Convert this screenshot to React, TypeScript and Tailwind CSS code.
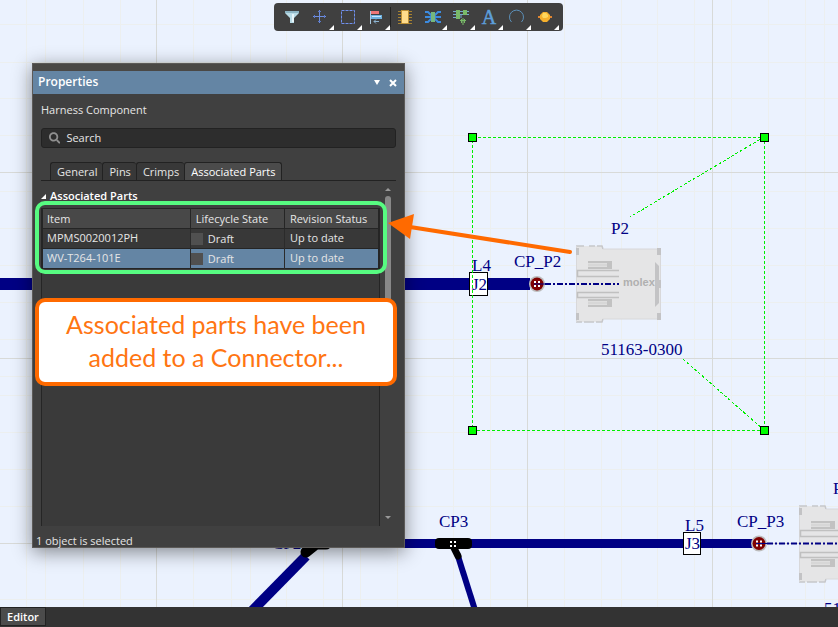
import { Fragment, useState } from 'react';
import type { ReactNode } from 'react';
import { FaSearch } from 'react-icons/fa';

const minorX = [26, 45, 83, 120, 193, 231, 250, 286, 323, 360, 397, 453, 490, 564, 601, 621, 657, 694, 731, 768, 805, 824];
const majorX = [156, 342, 527, 712];
const minorY = [24, 62, 98, 135, 191, 228, 265, 302, 339, 376, 395, 432, 469, 506, 599];
const majorY = [172, 358, 543];

const parts = [
  { item: 'MPMS0020012PH', state: 'Draft', revision: 'Up to date' },
  { item: 'WV-T264-101E', state: 'Draft', revision: 'Up to date' },
];

const tabs = ['General', 'Pins', 'Crimps', 'Associated Parts'];

const tools: { label: string; menu: boolean; icon: ReactNode }[] = [
  {
    label: 'Filter',
    menu: false,
    icon: (
      <>
        <path d="M3 4h14v2l-5 5v5H8v-5L3 6z" fill="#b9dbe6" />
        <path d="M3 4h14v2H3z" fill="#8db4c4" />
        <path d="M10 7h2v8h-2z" fill="#e6f5fa" />
      </>
    ),
  },
  {
    label: 'Move',
    menu: true,
    icon: (
      <>
        <path d="M9.5 3v13M3 9.5h13" stroke="#6f8fe0" fill="none" />
        <path d="M8 4.5h3M8 14.5h3M4.5 8v3M14.5 8v3" stroke="#5a78c8" fill="none" />
      </>
    ),
  },
  {
    label: 'Select area',
    menu: true,
    icon: <rect x="3.5" y="3.5" width="13" height="13" fill="none" stroke="#7090ee" strokeDasharray="3 1" />,
  },
  {
    label: 'Align',
    menu: true,
    icon: (
      <>
        <path d="M4.5 4v13" stroke="#a9c8e0" />
        <rect x="5" y="4" width="8" height="3" fill="#ee7777" />
        <rect x="5" y="8" width="11" height="4" fill="#6db1df" />
        <path d="M6 9.5h9" stroke="#c6e8ff" />
        <path d="M13 14.5H8M10 12.5l-2 2 2 2" stroke="#8db5d3" fill="none" />
      </>
    ),
  },
  {
    label: 'Component',
    menu: false,
    icon: (
      <>
        <path d="M3 4.5h14M3 7.5h14M3 10.5h14M3 13.5h14M3 16.5h14" stroke="#a78230" />
        <rect x="6.5" y="3.5" width="7" height="13" fill="#ffdc8c" stroke="#be9136" />
      </>
    ),
  },
  {
    label: 'Splice',
    menu: true,
    icon: (
      <>
        <path d="M2 5h3l4 4h2l4-4h3M2 10h16M2 15h3l4-4h2l4 4h3" stroke="#3c8be0" strokeWidth="2" fill="none" />
        <rect x="8" y="5" width="4" height="10" fill="#76b77d" />
      </>
    ),
  },
  {
    label: 'Harness connector',
    menu: true,
    icon: (
      <>
        <path d="M2 4.5h16M2 7.5h16M2 10.5h7M10 7v4" stroke="#76a9cf" />
        <rect x="5" y="3" width="4" height="9" fill="#79ba68" />
        <rect x="12" y="3" width="4" height="5" fill="#79ba68" />
        <path d="M9 13.5h6M12 11v7M10.5 12v4M13.5 12v4" stroke="#79ba68" />
      </>
    ),
  },
  {
    label: 'Text',
    menu: true,
    icon: (
      <text x="10" y="17" textAnchor="middle" fill="#5d9fdb" stroke="#5d9fdb" strokeWidth="0.5" className="font-['Liberation_Serif',serif] text-[20px]">
        A
      </text>
    ),
  },
  {
    label: 'Arc',
    menu: true,
    icon: <path d="M4.5 15a7 7 0 1 1 10 0" stroke="#5b8fb8" fill="none" />,
  },
  {
    label: 'No connect',
    menu: true,
    icon: (
      <>
        <path d="M3 10h14" stroke="#e08530" strokeWidth="2" />
        <path d="M8 5h4l3 3v4l-3 3H8l-3-3V8z" fill="#f6b02c" />
        <path d="M8 6h3l2 2v2l-2 1H8L7 9z" fill="#ffd75c" />
      </>
    ),
  },
];

function Toolbar() {
  return (
    <div className="absolute left-[274px] top-[3px] flex h-7 items-center rounded bg-[#404040] px-1">
      {tools.map((tool, i) => (
        <Fragment key={tool.label}>
          {i === 4 && <span className="h-5 w-px bg-[#222]" />}
          <button type="button" aria-label={tool.label} className="relative flex h-7 w-7 items-center justify-center">
            <svg viewBox="0 0 20 20" className="h-5 w-5">{tool.icon}</svg>
            {tool.menu && (
              <svg viewBox="0 0 5 5" className="absolute bottom-px right-0 h-[5px] w-[5px]">
                <path d="M5 0v5H0z" fill="#fff" />
              </svg>
            )}
          </button>
        </Fragment>
      ))}
    </div>
  );
}

function Connector({ x, y }: { x: number; y: number }) {
  return (
    <g transform={`translate(${x} ${y})`}>
      <path d="M0 1h27v3h58v70H27v3H0z" fill="#e5e5e6" />
      <path d="M0 1h8M13 1h6M21 1h5l1 3M0 77h6M8 77h10M20 77h6l1-3" stroke="#c6c7ca" strokeWidth="1.5" fill="none" />
      <path d="M27 4h58M27 74h58M.5 1v76M84.5 4v70" stroke="#d8d8da" fill="none" />
      <path d="M0 3h3v7H0zM0 68h3v7H0zM81 3h4v7h-4zM81 35h4v8h-4zM81 68h4v7h-4z" fill="#c3c3c5" />
      <path d="M79 17l4 4v37l-4 4z" fill="#c3c3c5" />
      <path d="M12 16h24v8H12zM12 54h24v8H12z" fill="#c2c2c2" />
      <path d="M12 18h19v4H12zM12 56h19v4H12z" fill="#dedede" />
      <path d="M12 20h19M12 58h19" stroke="#d0d0d0" />
      <path d="M43 25.5H1.5v6H43M43 47.5H1.5v5H43" fill="none" stroke="#c0c0c0" strokeWidth="1.5" />
      <text x="47" y="41" fill="#b0b0b0" className="font-['Liberation_Sans',sans-serif] text-[11px] font-bold">
        molex
      </text>
    </g>
  );
}

function Junction({ x, y }: { x: number; y: number }) {
  return (
    <g transform={`translate(${x} ${y})`}>
      <circle r="8" fill="#bcbcbc" />
      <circle r="6.5" fill="#800000" />
      <path d="M-3-3h2v2h-2zM1-3h2v2H1zM-3 1h2v2h-2zM1 1h2v2H1z" fill="#fff" />
      <path d="M-3 0H8" stroke="#000084" />
    </g>
  );
}

function Schematic() {
  return (
    <svg className="absolute inset-0 h-full w-full font-['Liberation_Serif',serif] text-[17px]">
      <g shapeRendering="crispEdges">
        {minorX.map((x) => <path key={x} d={`M${x}.5 0V2000`} stroke="#ecefef" />)}
        {minorY.map((y) => <path key={y} d={`M0 ${y}.5H3000`} stroke="#ecefef" />)}
        {majorX.map((x) => <path key={x} d={`M${x}.5 0V2000`} stroke="#d8dad8" />)}
        {majorY.map((y) => <path key={y} d={`M0 ${y}.5H3000`} stroke="#d8dad8" />)}
      </g>

      <Connector x={576} y={245} />
      <Connector x={799} y={505} />

      <g stroke="#000084" fill="none">
        <path d="M0 284H530" strokeWidth="12" />
        <path d="M380 543.5H753" strokeWidth="9" />
        <path d="M306 556L252 611" strokeWidth="10" />
        <path d="M457 553L475 610" strokeWidth="6" />
        <path d="M545 284H619" strokeWidth="2" strokeDasharray="6 2 2 2" />
        <path d="M767 543.5H842" strokeWidth="2" strokeDasharray="6 2 2 2" />
      </g>
      <path d="M306 552L316 544H326" stroke="#000" strokeWidth="11" strokeLinecap="round" fill="none" />
      <rect x="435" y="538" width="37" height="11" rx="4" />
      <path d="M453 546L458 556" stroke="#000" strokeWidth="7" strokeLinecap="round" />
      <path d="M450 541h2v2h-2zM454 541h2v2h-2zM450 545h2v2h-2zM454 545h2v2h-2z" fill="#fff" />
      <Junction x={537} y={284} />
      <Junction x={759} y={543.5} />

      <rect x="469.5" y="272.5" width="18" height="23" fill="#fff" stroke="#000" />
      <rect x="683.5" y="532.5" width="17" height="22" fill="#fff" stroke="#000" />

      <g fill="#000084">
        <text x="472" y="271">L4</text>
        <text x="472" y="290">J2</text>
        <text x="514" y="267">CP_P2</text>
        <text x="611" y="234">P2</text>
        <text x="601" y="355">51163-0300</text>
        <text x="685" y="531">L5</text>
        <text x="685" y="549">J3</text>
        <text x="737" y="527">CP_P3</text>
        <text x="833" y="494">P3</text>
        <text x="824" y="614">51163-0300</text>
        <text x="439" y="527">CP3</text>
        <text x="272" y="549">CP2</text>
      </g>

      <g stroke="#00f000" strokeDasharray="3 2" fill="none" shapeRendering="crispEdges">
        <rect x="472.5" y="137.5" width="292" height="293" />
        <path d="M764 137L630 217M683 359L764 430" />
      </g>
      {[[472, 137], [764, 137], [472, 430], [764, 430]].map(([x, y]) => (
        <rect key={`${x}-${y}`} x={x - 3.5} y={y - 3.5} width="8" height="8" fill="#00ff00" stroke="#000" />
      ))}
    </svg>
  );
}

function PartsTable() {
  return (
    <table className="w-full table-fixed border-collapse border border-[#252525] text-left">
      <colgroup>
        <col className="w-[44%]" />
        <col className="w-[28%]" />
        <col className="w-[28%]" />
      </colgroup>
      <thead>
        <tr className="h-5 border-b border-[#252525] bg-[#484848]">
          <th className="border-r border-[#252525] pl-1 font-normal">Item</th>
          <th className="border-r border-[#252525] pl-[5px] font-normal">Lifecycle State</th>
          <th className="pl-[5px] font-normal">Revision Status</th>
        </tr>
      </thead>
      <tbody>
        {parts.map((part, i) => (
          <tr key={part.item} className={`h-5 border-b border-[#252525] ${i === 1 ? 'bg-[#6485a4]' : 'bg-[#383838]'}`}>
            <td className="border-r border-[#2b2b2b] pb-px pl-1">{part.item}</td>
            <td className="border-r border-[#2b2b2b] pt-px">
              <span className="flex items-center gap-[5px]">
                <span className="h-3 w-3 bg-[#505050]" />
                {part.state}
              </span>
            </td>
            <td className="pb-px pl-[5px]">{part.revision}</td>
          </tr>
        ))}
      </tbody>
    </table>
  );
}

function PropertiesPanel() {
  const [active, setActive] = useState('Associated Parts');
  const [query, setQuery] = useState('');

  return (
    <section className="absolute left-8 top-[63px] w-[373px] border border-[#5c5a58] bg-[#404040] text-[11px] leading-4 text-[#e6e6e6] shadow-[0_4px_18px_rgba(0,0,0,0.45)]">
      <div className="h-[7px] bg-[#4a4845]" />
      <header className="flex h-[23px] items-center bg-[#6485a4] pl-[5px] pr-[3px] text-white">
        <h1 className="flex-1 pb-px text-[12px] font-semibold">Properties</h1>
        <button type="button" aria-label="Panel menu" className="p-1">
          <svg viewBox="0 0 8 8" className="h-2 w-2"><path d="M1 1h6L4 6z" fill="#fff" /></svg>
        </button>
        <button type="button" aria-label="Close" className="p-1">
          <svg viewBox="0 0 8 8" className="h-2 w-2"><path d="M1 1l6 6M7 1L1 7" stroke="#fff" strokeWidth="2" /></svg>
        </button>
      </header>

      <div className="px-2">
        <p className="pb-[10px] pt-2">Harness Component</p>
        <label className="flex h-5 items-center gap-[6px] rounded-[3px] border border-[#222] bg-[#2d2d2d] pl-[7px]">
          <FaSearch className="h-3 w-3 text-[#8f8f8f]" />
          <input
            type="text"
            aria-label="Search"
            placeholder="Search"
            value={query}
            onChange={(e) => setQuery(e.target.value)}
            className="w-full bg-transparent outline-none placeholder:text-[#e6e6e6]"
          />
        </label>

        <div role="tablist" className="mt-[14px] flex border-b border-[#222] pl-[9px]">
          {tabs.map((tab) => (
            <button
              key={tab}
              type="button"
              role="tab"
              aria-selected={active === tab}
              onClick={() => setActive(tab)}
              className={`h-[18px] rounded-t-[3px] border-l border-t border-[#222] pl-[6px] pr-[5px] last:border-r ${active === tab ? 'bg-[#4b4b4b] text-white' : 'bg-[#383838]'}`}
            >
              {tab}
            </button>
          ))}
        </div>

        <div className="mt-[6px] flex">
          <div className="w-[339px]">
            <h2 className="flex h-[18px] items-center gap-[4px] font-semibold text-white">
              <svg viewBox="0 0 5 5" className="h-[5px] w-[5px]"><path d="M5 0v5H0z" fill="#fff" /></svg>
              Associated Parts
            </h2>
            <div className="mt-[3px] h-[318px] border-x border-[#252525] bg-[#3a3a3a]">
              <PartsTable />
            </div>
          </div>
          <div className="flex flex-1 flex-col items-center">
            <svg viewBox="0 0 6 4" className="mt-px h-1 w-[6px]"><path d="M0 3l3-3 3 3z" fill="#999" /></svg>
            <div className="mt-1 h-[110px] w-[6px] rounded-full bg-[#888]" />
            <svg viewBox="0 0 6 4" className="mt-auto mb-[6px] h-1 w-[6px]"><path d="M0 0h6L3 3z" fill="#999" /></svg>
          </div>
        </div>
      </div>
      <footer className="px-[3px] pt-2 leading-[13px]">1 object is selected</footer>
    </section>
  );
}

function Annotations() {
  return (
    <>
      <div className="pointer-events-none absolute left-[35px] top-[201px] h-[73px] w-[352px] rounded-[10px] border-4 border-[#57fb81]" />
      <svg className="pointer-events-none absolute inset-0 h-full w-full">
        <path d="M410 227L570 252" stroke="#ff6a00" strokeWidth="4" strokeLinecap="round" />
        <path d="M388 223L414 214L410 239z" fill="#ff6a00" />
      </svg>
      <p className="absolute left-[35px] top-[298px] w-[362px] rounded-[10px] border-4 border-[#ff6a00] bg-white pb-2 pt-[6px] text-center font-['Lato',sans-serif] text-[25px] leading-[33px] text-[#ff7512]">
        Associated parts have been
        <br />
        added to a Connector...
      </p>
    </>
  );
}

export default function App() {
  return (
    <div className="flex h-screen flex-col font-['Open_Sans',sans-serif]">
      <main className="relative flex-1 overflow-hidden bg-[#ebf2fe]">
        <Schematic />
        <Toolbar />
        <PropertiesPanel />
        <Annotations />
      </main>
      <footer className="flex h-5 bg-[#333] pb-px">
        <button type="button" className="border border-[#222] bg-[#4b4b4b] px-[6px] text-[11px] font-semibold leading-4 text-white">
          Editor
        </button>
      </footer>
    </div>
  );
}
